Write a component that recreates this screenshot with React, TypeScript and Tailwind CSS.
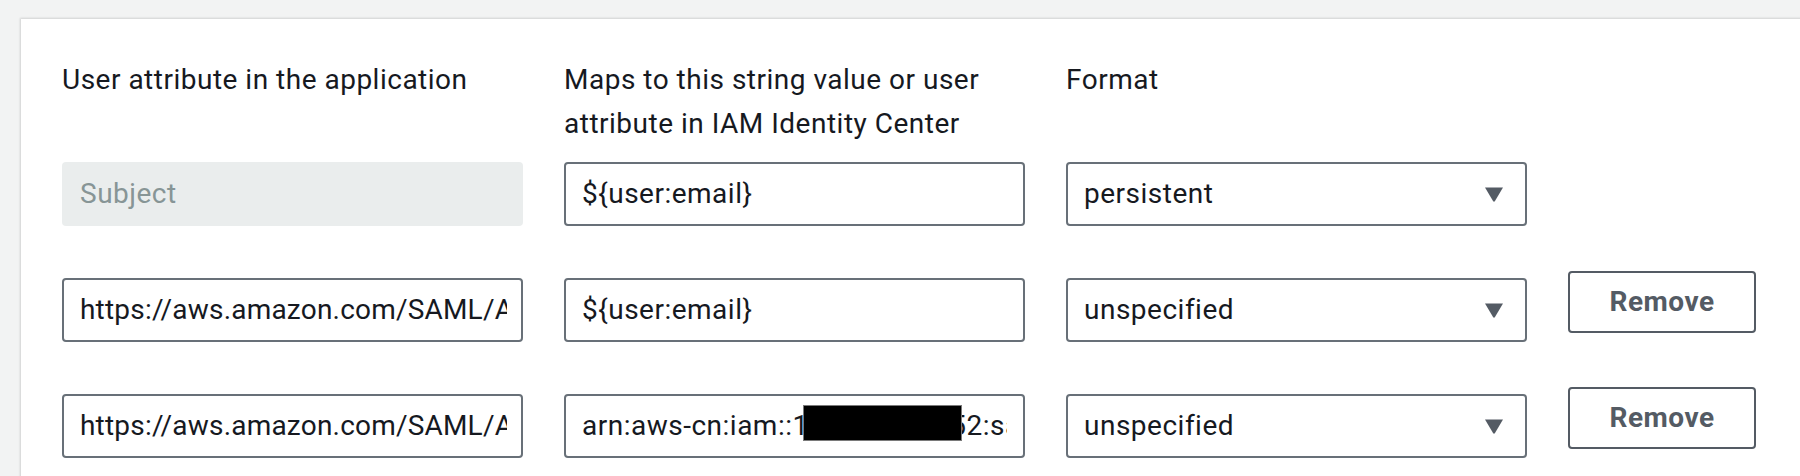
const font = { fontFamily: "Roboto, 'Open Sans', sans-serif" };

function TextBox({ children, pr = "pr-[16px]" }: { children: React.ReactNode; pr?: string }) {
  return (
    <div className={`relative flex h-[64px] items-center rounded-[4px] border-2 border-[#687078] bg-white pl-[16px] ${pr}`}>
      <span className="block overflow-hidden whitespace-nowrap text-[#16191f]">{children}</span>
    </div>
  );
}

function Select({ value }: { value: string }) {
  return (
    <div className="flex h-[64px] items-center justify-between rounded-[4px] border-2 border-[#687078] bg-white pl-[16px] pr-[21px]">
      <span className="text-[#16191f]">{value}</span>
      <svg width="20" height="16" viewBox="0 0 20 16">
        <path d="M1 1.5 L19 1.5 L11 15 Q10 16.5 9 15 Z" fill="#545b64" />
      </svg>
    </div>
  );
}

function RemoveButton() {
  return (
    <button className="-mt-[7px] flex h-[62px] w-[188px] items-center justify-center self-start rounded-[4px] border-2 border-[#545b64] bg-white font-bold text-[#545b64]">
      Remove
    </button>
  );
}

export default function App() {
  return (
    <div className="h-[476px] overflow-hidden bg-[#f2f3f3] pl-[21px] pt-[19px]" style={font}>
      <div className="h-[600px] w-[1800px] bg-white pl-[41px] pt-[39px] shadow-[-1px_-1px_2px_rgba(0,0,0,0.14)]">
        <div className="text-[28px] leading-[44px] tracking-[0.5px] text-[#16191f]">
          <div className="mb-[16px] grid grid-cols-[461px_461px_461px_188px] gap-x-[41px]">
            <div>User attribute in the application</div>
            <div>Maps to this string value or user attribute in IAM Identity Center</div>
            <div>Format</div>
            <div />
          </div>

          <div className="flex flex-col gap-[52px]">
            <div className="grid grid-cols-[461px_461px_461px_188px] gap-x-[41px]">
              <div className="flex h-[64px] items-center rounded-[4px] bg-[#eaeded] pl-[18px] text-[#879596]">
                Subject
              </div>
              <TextBox>{"${user:email}"}</TextBox>
              <Select value="persistent" />
              <div />
            </div>

            <div className="grid grid-cols-[461px_461px_461px_188px] gap-x-[41px]">
              <TextBox pr="pr-[14px]">
                <span className="tracking-[0.2px]">https://aws.amazon.com/SAML/Attributes/RoleSessionName</span>
              </TextBox>
              <TextBox>{"${user:email}"}</TextBox>
              <Select value="unspecified" />
              <RemoveButton />
            </div>

            <div className="grid grid-cols-[461px_461px_461px_188px] gap-x-[41px]">
              <TextBox pr="pr-[14px]">
                <span className="tracking-[0.2px]">https://aws.amazon.com/SAML/Attributes/Role</span>
              </TextBox>
              <div className="relative">
                <TextBox>
                  arn:aws-cn:iam::1<span className="tracking-[0px]">234567890</span>52:saml-provider/IdentityCenter
                </TextBox>
                <div className="absolute left-[239px] top-[11px] h-[36px] w-[159px] border border-[#7a7a7a] bg-black" />
              </div>
              <Select value="unspecified" />
              <RemoveButton />
            </div>
          </div>
        </div>
      </div>
    </div>
  );
}
